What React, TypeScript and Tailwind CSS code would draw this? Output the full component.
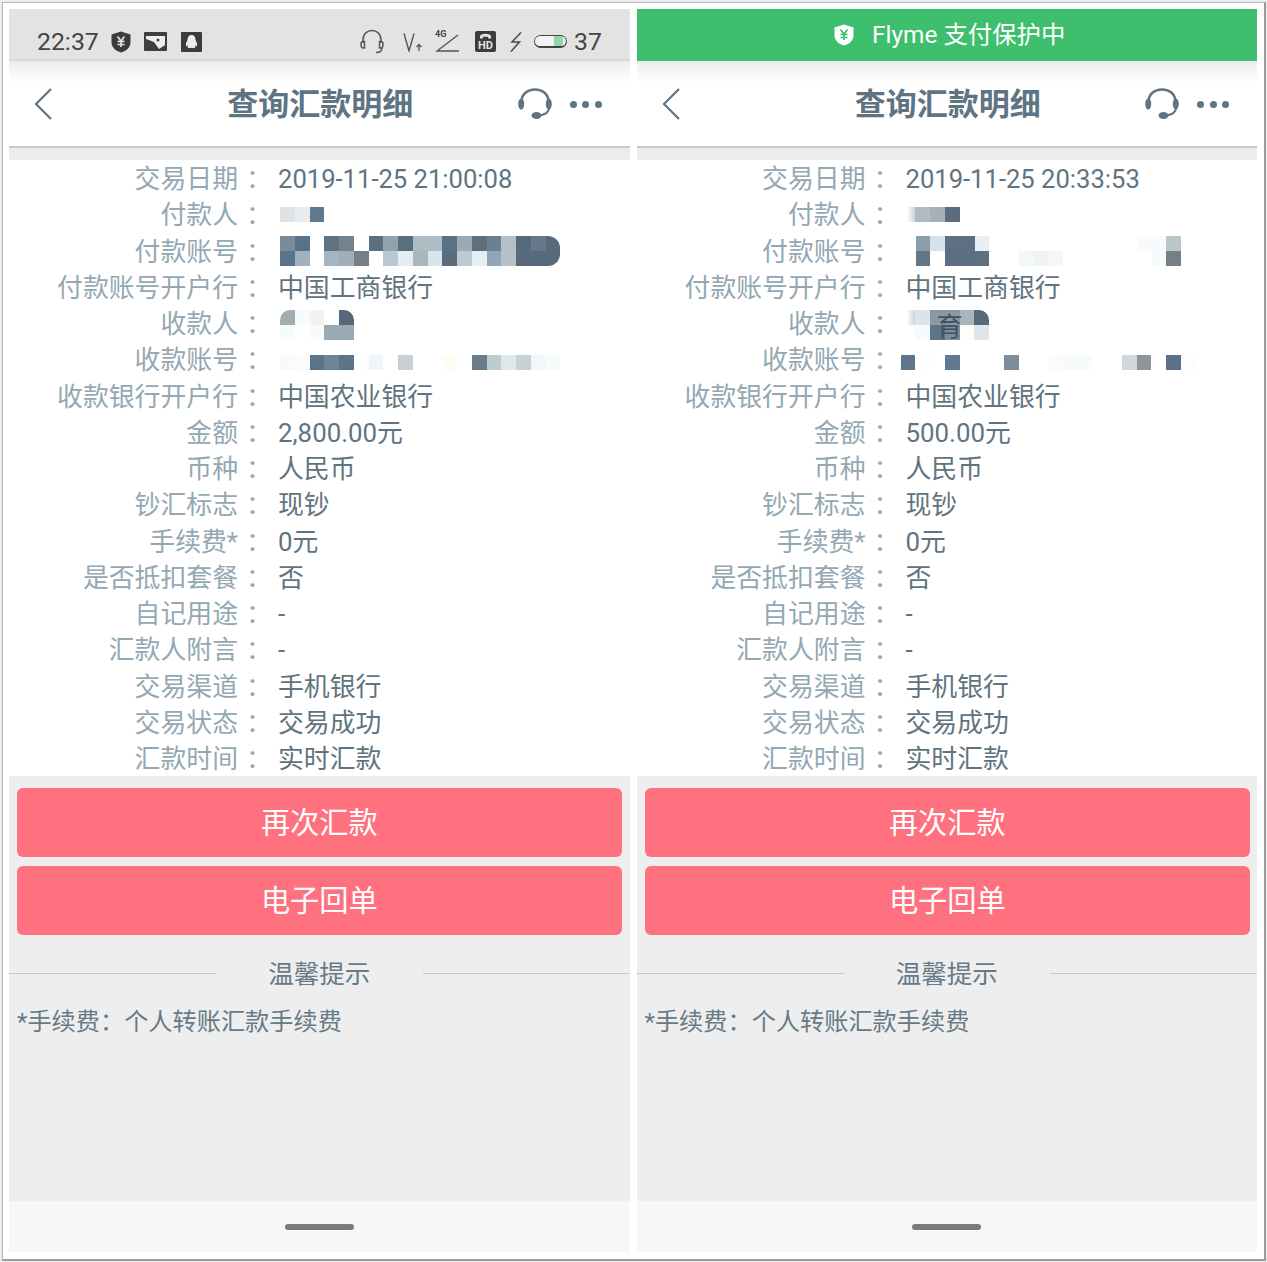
import { ReactNode } from 'react';

type MosaicProps = {
  rows: string[][];
  offset: string;
  children?: ReactNode;
};

function Mosaic({ rows, offset, children }: MosaicProps) {
  return (
    <div className={`relative flex flex-col ${offset}`}>
      {rows.map((cells, i) => (
        <div key={i} className="flex">
          {cells.map((cell, j) => (
            <div key={j} className={`h-[15px] w-[14.75px] shrink-0 ${cell}`} />
          ))}
        </div>
      ))}
      {children}
    </div>
  );
}

const W = 'bg-white';
const L1 = 'bg-[#f7fbfc]';
const L2 = 'bg-[#f3f7f9]';
const SMUDGE = 'bg-gradient-to-r from-white from-40% to-[#cdd4d9]';

function PayerLeft() {
  return <Mosaic offset="ml-[2px] -mt-[4px]" rows={[['bg-[#dfe3e6]', 'bg-[#e8ecef]', 'bg-[#5f7a8e]']]} />;
}

function AccountLeft() {
  return (
    <Mosaic
      offset="ml-[2px] -mt-[4px]"
      rows={[
        ['bg-[#7b8b97]', 'bg-[#587389]', W, 'bg-[#5f7383]', 'bg-[#73848f]', W, 'bg-[#5c6f80]', 'bg-[#92a3ad]', 'bg-[#586f7d]', 'bg-[#b0bcc3]', 'bg-[#b0bcc3]', 'bg-[#567189]', 'bg-[#9caab3]', 'bg-[#5f6f7d]', 'bg-[#6c8091]', 'bg-[#b5bfc5]', 'bg-[#566a7c]', 'bg-[#66798a]', 'bg-[#566a7c] rounded-tr-[12px]'],
        ['bg-[#5b7489]', 'bg-[#a2b1bb]', W, 'bg-[#a3b5c2]', 'bg-[#a0aeb8]', 'bg-[#757f86]', W, 'bg-[#b7c9d5]', 'bg-[#e4edf3]', 'bg-[#a9b6bd]', 'bg-[#d7e6ea]', 'bg-[#5a6d7c]', 'bg-[#bccad3]', 'bg-[#e5eef2]', 'bg-[#8fa6b8]', 'bg-[#b5c0c7]', 'bg-[#566a7c]', 'bg-[#566a7c]', 'bg-[#566a7c] rounded-br-[12px]'],
      ]}
    />
  );
}

function PayeeLeft() {
  return (
    <Mosaic
      offset="ml-[2px]"
      rows={[
        ['bg-[#a3adb4] rounded-tl-[10px]', L1, 'bg-[#f0f3f3]', W, 'bg-[#56697c] rounded-tr-[10px]'],
        [L1, W, 'bg-[#fafafa]', 'bg-[#9aa9b2]', 'bg-[#9aa9b2]'],
      ]}
    />
  );
}

function PayeeAccountLeft() {
  return (
    <Mosaic
      offset="ml-[2px] mt-[2px]"
      rows={[[L1, 'bg-[#fbfbfb]', 'bg-[#5c7488]', 'bg-[#6f8494]', 'bg-[#5c7488]', 'bg-[#fcfdfd]', 'bg-[#eef6fb]', W, 'bg-[#c8d0d6]', W, W, 'bg-[#fffcf6]', W, 'bg-[#6a7b8a]', 'bg-[#bfcbd2]', 'bg-[#dfe7eb]', 'bg-[#c5d1d4]', L2, L1]]}
    />
  );
}

function PayerRight() {
  return <Mosaic offset="-ml-[5px] -mt-[4px]" rows={[[SMUDGE, 'bg-[#b0bcc5]', 'bg-[#a7b0b8]', 'bg-[#5c6c7c]']]} />;
}

function AccountRight() {
  return (
    <Mosaic
      offset="ml-[10px] -mt-[4px]"
      rows={[
        ['bg-[#8b9fab]', 'bg-[#d5e2e8]', 'bg-[#5c7084]', 'bg-[#5c7084]', 'bg-[#e7f0f2]', W, W, W, W, W, W, W, W, W, W, L1, L1, 'bg-[#bac6ca]'],
        ['bg-[#5f7789]', W, 'bg-[#5a6e80]', 'bg-[#5a6e80]', 'bg-[#5f7080]', W, W, L2, 'bg-[#eef3f5]', 'bg-[#f4f6f7]', W, W, W, W, W, W, L1, 'bg-[#757f86]'],
      ]}
    />
  );
}

function PayeeRight() {
  return (
    <Mosaic
      offset="-ml-[5px]"
      rows={[
        [SMUDGE, 'bg-[#dbe4e8]', 'bg-[#8b98a3]', 'bg-[#8b98a3]', 'bg-[#a9b4bc]', 'bg-[#566a7c] rounded-tr-[10px]'],
        [W, L1, 'bg-[#5f7486]', 'bg-[#7c8c98]', 'bg-[#fdfdfa]', 'bg-[#dfe6ea]'],
      ]}
    >
      <span className="absolute left-[36px] top-[2px] text-[26px] leading-[30px] text-[#3f5363]">育</span>
    </Mosaic>
  );
}

function PayeeAccountRight() {
  return (
    <Mosaic
      offset="-ml-[5px] mt-[2px]"
      rows={[['bg-[#5f7589]', 'bg-[#fdfdfb]', W, 'bg-[#5f7a90]', W, W, W, 'bg-[#7d8d9b]', W, W, 'bg-[#fdfbf8]', L1, L1, W, W, 'bg-[#d0d8df]', 'bg-[#8f949b]', W, 'bg-[#5c7087]', 'bg-[#fdfdfb]']]}
    />
  );
}

function buildRows(
  date: string,
  payer: ReactNode,
  account: ReactNode,
  payee: ReactNode,
  payeeAccount: ReactNode,
  amount: string,
): [string, ReactNode][] {
  return [
    ['交易日期', <span className="text-[25.600px]">{date}</span>],
    ['付款人', payer],
    ['付款账号', account],
    ['付款账号开户行', '中国工商银行'],
    ['收款人', payee],
    ['收款账号', payeeAccount],
    ['收款银行开户行', '中国农业银行'],
    ['金额', amount],
    ['币种', '人民币'],
    ['钞汇标志', '现钞'],
    ['手续费*', '0元'],
    ['是否抵扣套餐', '否'],
    ['自记用途', '-'],
    ['汇款人附言', '-'],
    ['交易渠道', '手机银行'],
    ['交易状态', '交易成功'],
    ['汇款时间', '实时汇款'],
  ];
}

function ShieldYen({ fg, bg, className }: { fg: string; bg: string; className: string }) {
  return (
    <svg viewBox="0 0 20 22" className={className}>
      <path d="M10 .5 19.500 3.500V11c0 5.500-4 9-9.500 10.500C4.500 20 .5 16.500 .5 11V3.500Z" fill={bg} />
      <path d="M6.500 5.500 10 10l3.500-4.500M6.500 10.500h7M6.500 13.500h7M10 10v6" stroke={fg} strokeWidth="1.700" fill="none" />
    </svg>
  );
}

function StatusBar() {
  return (
    <div className="flex h-[52px] items-center border-b-2 border-[#d8d8d8] bg-[#e3e3e3] pl-[28px] pt-[16px] text-[#444]">
      <span className="w-[62px] text-[24.800px] leading-none">22:37</span>
      <ShieldYen fg="#e3e3e3" bg="#3c3c3c" className="ml-[12px] h-[22px] w-[20px]" />
      <svg viewBox="0 0 23 19" className="ml-[13px] h-[19px] w-[23px]">
        <rect width="23" height="19" rx="1" fill="#3e3e3e" />
        <path d="M2 4h19v9l-6 4-5-7-8-3Z" fill="#eee" />
        <circle cx="14" cy="8" r="1.500" fill="#3e3e3e" />
      </svg>
      <svg viewBox="0 0 21 20" className="ml-[14px] h-[20px] w-[21px]">
        <rect width="21" height="20" rx="1" fill="#3c3c3c" />
        <path d="M10.500 3c3 0 4 2.500 4 5 1 2 2 4 1.500 6-.7.500-1.500-.5-2-1 .2 1.500 1 2-.2 2.800-1 .5-2.300.4-3.300-.1-1 .5-2.300.6-3.300.1-1.200-.8-.4-1.300-.2-2.800-.5.5-1.300 1.500-2 1-.5-2 .5-4 1.500-6 0-2.500 1-5 4-5Z" fill="#eee" />
      </svg>
      <svg viewBox="0 0 24 25" fill="none" stroke="#555" strokeWidth="1.500" className="ml-[158px] h-[25px] w-[24px]">
        <path d="M3 14V11C3 5 7 1.500 12 1.500S21 5 21 11v3" />
        <path d="M3 12.500c-1.500 0-2 1-2 3 0 2.500.7 3.500 2.500 3.500h1v-6.500ZM21 12.500c1.500 0 2 1 2 3 0 2.500-.7 3.500-2.500 3.500h-1v-6.500Z" />
        <path d="M22 19c0 3-2 4.500-6 4.500" />
      </svg>
      <svg viewBox="0 0 20 20" fill="none" stroke="#555" className="ml-[19px] h-[20px] w-[20px]">
        <path d="M1 1.500 6 19l5-17.500" strokeWidth="1.400" />
        <path d="M16 19v-6M13.500 15l2.500-2.500 2.500 2.500" strokeWidth="1.300" />
      </svg>
      <div className="relative ml-[12px] h-[22px] w-[24px]">
        <span className="absolute left-0 top-[-2px] text-[9px] font-bold leading-[10px] text-[#444]">4G</span>
        <svg viewBox="0 0 24 22" fill="none" stroke="#555" strokeWidth="1.400" className="absolute inset-0 h-[22px] w-[24px]">
          <path d="M23 4 2 20h22" />
        </svg>
      </div>
      <div className="ml-[16px] flex h-[21px] w-[21px] flex-col items-center justify-end rounded-[2px] bg-[#3c3c3c] pb-[1px]">
        <svg viewBox="0 0 15 7" className="mb-[1px] h-[6px] w-[13px]">
          <path d="M1 6.500V4C1 2 4 1 7.500 1S14 2 14 4v2.500h-3.500V4.500h-6v2Z" fill="#e3e3e3" />
        </svg>
        <span className="text-[11px] font-bold leading-[11px] text-[#e3e3e3]">HD</span>
      </div>
      <svg viewBox="0 0 13 20" className="ml-[13px] h-[20px] w-[13px]">
        <path d="M12 .5 3 10h7.500L2 19.500" fill="none" stroke="#4a4a4a" strokeWidth="1.500" />
      </svg>
      <div className="ml-[12px] flex h-[13px] w-[33px] overflow-hidden rounded-full border-[1.500px] border-b-2 border-[#444]">
        <div className="w-[19px] bg-[#f2f2f2]" />
        <div className="w-[9px] bg-[#8fd8a8]" />
        <div className="w-[2px] bg-[#f2f2f2]" />
      </div>
      <span className="ml-[7px] text-[24.800px] leading-none">37</span>
    </div>
  );
}

function PayBar() {
  return (
    <div className="flex h-[52px] items-center justify-center gap-[18px] bg-[#3dbf6e] pl-[6px] text-[24.400px] leading-none text-white">
      <ShieldYen fg="#3dbf6e" bg="#fff" className="h-[22px] w-[20px]" />
      <span>Flyme 支付保护中</span>
    </div>
  );
}

function NavBar() {
  return (
    <div className="grid h-[85px] grid-cols-[1fr_auto_1fr] items-center bg-gradient-to-b from-[#ececec] from-0% to-white to-25% pl-[25px] pr-[28px] pt-[2px]">
      <svg viewBox="0 0 18 32" fill="none" stroke="#607483" strokeWidth="2.200" className="h-[32px] w-[18px]">
        <path d="M17 1 2 16l15 15" />
      </svg>
      <h1 className="ml-[5px] text-[31px] font-bold leading-none text-[#5f7483]">查询汇款明细</h1>
      <div className="flex items-center justify-end gap-[18px]">
        <svg viewBox="0 0 34 32" className="h-[32px] w-[34px]" fill="#5f7483">
          <path d="M3.500 14C3.500 6 9.500 1.500 17 1.500S30.500 6 30.500 14" fill="none" stroke="#5f7483" strokeWidth="2.500" />
          <ellipse cx="3.200" cy="16" rx="3" ry="5.500" />
          <ellipse cx="30.800" cy="16" rx="3" ry="5.500" />
          <path d="M31 20c0 4-3 6.500-10 7.500" fill="none" stroke="#5f7483" strokeWidth="2" />
          <ellipse cx="18.500" cy="27.500" rx="5" ry="3.500" />
        </svg>
        <div className="flex gap-[5.500px]">
          <span className="h-[7px] w-[7px] rounded-full bg-[#5f7483]" />
          <span className="h-[7px] w-[7px] rounded-full bg-[#5f7483]" />
          <span className="h-[7px] w-[7px] rounded-full bg-[#5f7483]" />
        </div>
      </div>
    </div>
  );
}

function Panel({ top, rows, buttonPad }: { top: ReactNode; rows: [string, ReactNode][]; buttonPad: string }) {
  return (
    <div className="flex w-full flex-col bg-[#eeeeee]">
      {top}
      <NavBar />
      <div className="h-[14px] border-t-2 border-[#bccdd4] bg-[#ececec]" />
      <div className="bg-white">
        {rows.map(([label, value]) => (
          <div key={label} className="flex h-[36.250px] items-center pt-[4px] leading-none">
            <span className="w-[229px] text-right text-[25.850px] text-[#93a8b3]">{label}</span>
            <span className="w-[40px] pl-[8px] text-[25.850px] text-[#93a8b3]">：</span>
            <div className="text-[25.850px] text-[#5f7480]">{value}</div>
          </div>
        ))}
      </div>
      <div className={`flex flex-col gap-[9px] pl-[8px] pt-[12px] ${buttonPad}`}>
        <button className="h-[69px] rounded-[6px] bg-[#ff717f] pt-[3px] text-[29.200px] text-white">再次汇款</button>
        <button className="h-[69px] rounded-[6px] bg-[#ff717f] pt-[3px] text-[29.200px] text-white">电子回单</button>
      </div>
      <div className="mt-[21px] flex items-center">
        <div className="mb-[2px] h-px w-[207px] bg-[#c4c8cb]" />
        <span className="flex-1 text-center text-[25.500px] leading-[36px] text-[#667a87]">温馨提示</span>
        <div className="mb-[2px] h-px w-[207px] bg-[#c4c8cb]" />
      </div>
      <p className="h-[209px] px-[8px] pt-[12px] text-[24.200px] leading-[36px] text-[#667a87]">*手续费：个人转账汇款手续费</p>
      <div className="flex h-[51px] justify-center bg-[#f7f7f7] pt-[23px]">
        <div className="h-[6px] w-[69px] rounded-full bg-[#7a7a7a]" />
      </div>
    </div>
  );
}

export default function App() {
  return (
    <div
      className="h-[1262px] w-[1267px] overflow-hidden bg-[#ececec] pl-[2px] pr-[1px] pt-[2px]"
      style={{ fontFamily: 'Roboto, "Noto Sans CJK SC", sans-serif' }}
    >
      <div className="flex h-[1259px] gap-[7px] border-b-2 border-l border-r-2 border-t border-b-[#9c9c9c] border-l-[#b4b4b4] border-r-[#9c9c9c] border-t-[#b4b4b4] bg-white pb-[7px] pl-[6px] pr-[7px] pt-[6px]">
        <Panel
          top={<StatusBar />}
          buttonPad="pr-[8px]"
          rows={buildRows('2019-11-25 21:00:08', <PayerLeft />, <AccountLeft />, <PayeeLeft />, <PayeeAccountLeft />, '2,800.00元')}
        />
        <Panel
          top={<PayBar />}
          buttonPad="pr-[7px]"
          rows={buildRows('2019-11-25 20:33:53', <PayerRight />, <AccountRight />, <PayeeRight />, <PayeeAccountRight />, '500.00元')}
        />
      </div>
    </div>
  );
}
